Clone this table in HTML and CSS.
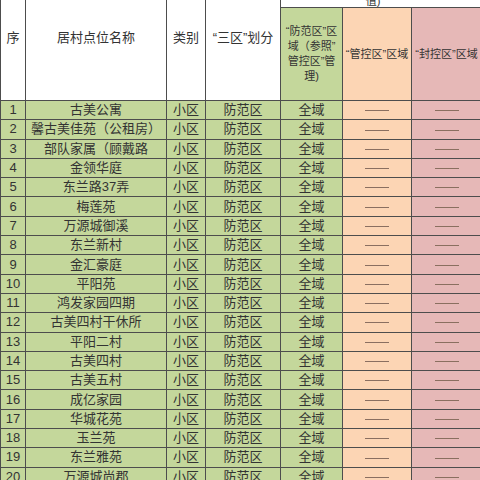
FILE: index.html
```html
<!DOCTYPE html>
<html lang="zh-CN">
<head>
<meta charset="utf-8">
<link rel="stylesheet" href="styles.css">
</head>
<body>
<div class="frame">
<table class="grid">
<colgroup>
<col class="c1"><col class="c2"><col class="c3"><col class="c4"><col class="c5"><col class="c6"><col class="c7">
</colgroup>
<thead>
<tr class="top">
<th rowspan="2" class="h">序</th>
<th rowspan="2" class="h">居村点位名称</th>
<th rowspan="2" class="h">类别</th>
<th rowspan="2" class="h">“三区”划分</th>
<th colspan="3" class="note"><span class="notetext">值)</span></th>
</tr>
<tr class="sub">
<th class="s g">“防范区”区<br>域（参照”<br>管控区”管<br>理)</th>
<th class="s o">“管控区”区域</th>
<th class="s p">“封控区”区域</th>
</tr>
</thead>
<tbody>
<tr><td>1</td><td>古美公寓</td><td>小区</td><td>防范区</td><td>全域</td><td class="o"><span class="dash"></span></td><td class="p"><span class="dash"></span></td></tr>
<tr><td>2</td><td>馨古美佳苑（公租房）</td><td>小区</td><td>防范区</td><td>全域</td><td class="o"><span class="dash"></span></td><td class="p"><span class="dash"></span></td></tr>
<tr><td>3</td><td>部队家属（顾戴路</td><td>小区</td><td>防范区</td><td>全域</td><td class="o"><span class="dash"></span></td><td class="p"><span class="dash"></span></td></tr>
<tr><td>4</td><td>金领华庭</td><td>小区</td><td>防范区</td><td>全域</td><td class="o"><span class="dash"></span></td><td class="p"><span class="dash"></span></td></tr>
<tr><td>5</td><td>东兰路37弄</td><td>小区</td><td>防范区</td><td>全域</td><td class="o"><span class="dash"></span></td><td class="p"><span class="dash"></span></td></tr>
<tr><td>6</td><td>梅莲苑</td><td>小区</td><td>防范区</td><td>全域</td><td class="o"><span class="dash"></span></td><td class="p"><span class="dash"></span></td></tr>
<tr><td>7</td><td>万源城御溪</td><td>小区</td><td>防范区</td><td>全域</td><td class="o"><span class="dash"></span></td><td class="p"><span class="dash"></span></td></tr>
<tr><td>8</td><td>东兰新村</td><td>小区</td><td>防范区</td><td>全域</td><td class="o"><span class="dash"></span></td><td class="p"><span class="dash"></span></td></tr>
<tr><td>9</td><td>金汇豪庭</td><td>小区</td><td>防范区</td><td>全域</td><td class="o"><span class="dash"></span></td><td class="p"><span class="dash"></span></td></tr>
<tr><td>10</td><td>平阳苑</td><td>小区</td><td>防范区</td><td>全域</td><td class="o"><span class="dash"></span></td><td class="p"><span class="dash"></span></td></tr>
<tr><td>11</td><td>鸿发家园四期</td><td>小区</td><td>防范区</td><td>全域</td><td class="o"><span class="dash"></span></td><td class="p"><span class="dash"></span></td></tr>
<tr><td>12</td><td>古美四村干休所</td><td>小区</td><td>防范区</td><td>全域</td><td class="o"><span class="dash"></span></td><td class="p"><span class="dash"></span></td></tr>
<tr><td>13</td><td>平阳二村</td><td>小区</td><td>防范区</td><td>全域</td><td class="o"><span class="dash"></span></td><td class="p"><span class="dash"></span></td></tr>
<tr><td>14</td><td>古美四村</td><td>小区</td><td>防范区</td><td>全域</td><td class="o"><span class="dash"></span></td><td class="p"><span class="dash"></span></td></tr>
<tr><td>15</td><td>古美五村</td><td>小区</td><td>防范区</td><td>全域</td><td class="o"><span class="dash"></span></td><td class="p"><span class="dash"></span></td></tr>
<tr><td>16</td><td>成亿家园</td><td>小区</td><td>防范区</td><td>全域</td><td class="o"><span class="dash"></span></td><td class="p"><span class="dash"></span></td></tr>
<tr><td>17</td><td>华城花苑</td><td>小区</td><td>防范区</td><td>全域</td><td class="o"><span class="dash"></span></td><td class="p"><span class="dash"></span></td></tr>
<tr><td>18</td><td>玉兰苑</td><td>小区</td><td>防范区</td><td>全域</td><td class="o"><span class="dash"></span></td><td class="p"><span class="dash"></span></td></tr>
<tr><td>19</td><td>东兰雅苑</td><td>小区</td><td>防范区</td><td>全域</td><td class="o"><span class="dash"></span></td><td class="p"><span class="dash"></span></td></tr>
<tr><td>20</td><td>万源城尚郡</td><td>小区</td><td>防范区</td><td>全域</td><td class="o"><span class="dash"></span></td><td class="p"><span class="dash"></span></td></tr>
</tbody>
</table>
</div>
</body>
</html>
```
FILE: styles.css
```css
html, body {
  margin: 0;
  padding: 0;
  background: #ffffff;
}
.frame {
  width: 480px;
  height: 480px;
  overflow: hidden;
}
.grid {
  border-collapse: collapse;
  table-layout: fixed;
  width: 481px;
  margin-top: -28px;
  font-family: "Liberation Sans", "Noto Sans CJK SC", sans-serif;
  color: #333333;
  font-size: 13px;
}
.c1 { width: 25px; }
.c2 { width: 141px; }
.c3 { width: 39px; }
.c4 { width: 75px; }
.c5 { width: 62px; }
.c6 { width: 69px; }
.c7 { width: 70px; }
.grid th, .grid td {
  border: 1px solid #4d4d4d;
  padding: 0;
  text-align: center;
  font-weight: normal;
  white-space: nowrap;
  overflow: hidden;
}
.top { height: 35px; }
.sub { height: 93px; }
.h {
  background: #ffffff;
  font-size: 13px;
}
.note {
  background: #ffffff;
  vertical-align: bottom;
  font-size: 11px;
  line-height: 12px;
  padding-bottom: 4px;
}
.notetext {
  display: inline-block;
  margin-left: -16px;
}
.s {
  font-size: 11px;
  line-height: 15px;
  padding-top: 3px;
}
tbody tr { height: 19.3px; }
tbody td {
  background: #c4d79b;
  line-height: 16px;
}
.g { background: #c4d79b; }
.o, tbody td.o { background: #fcd5b4; }
.p, tbody td.p { background: #e6b8b7; }
.dash {
  display: inline-block;
  width: 24px;
  height: 1px;
  background: #8a6f60;
  vertical-align: middle;
}
```
